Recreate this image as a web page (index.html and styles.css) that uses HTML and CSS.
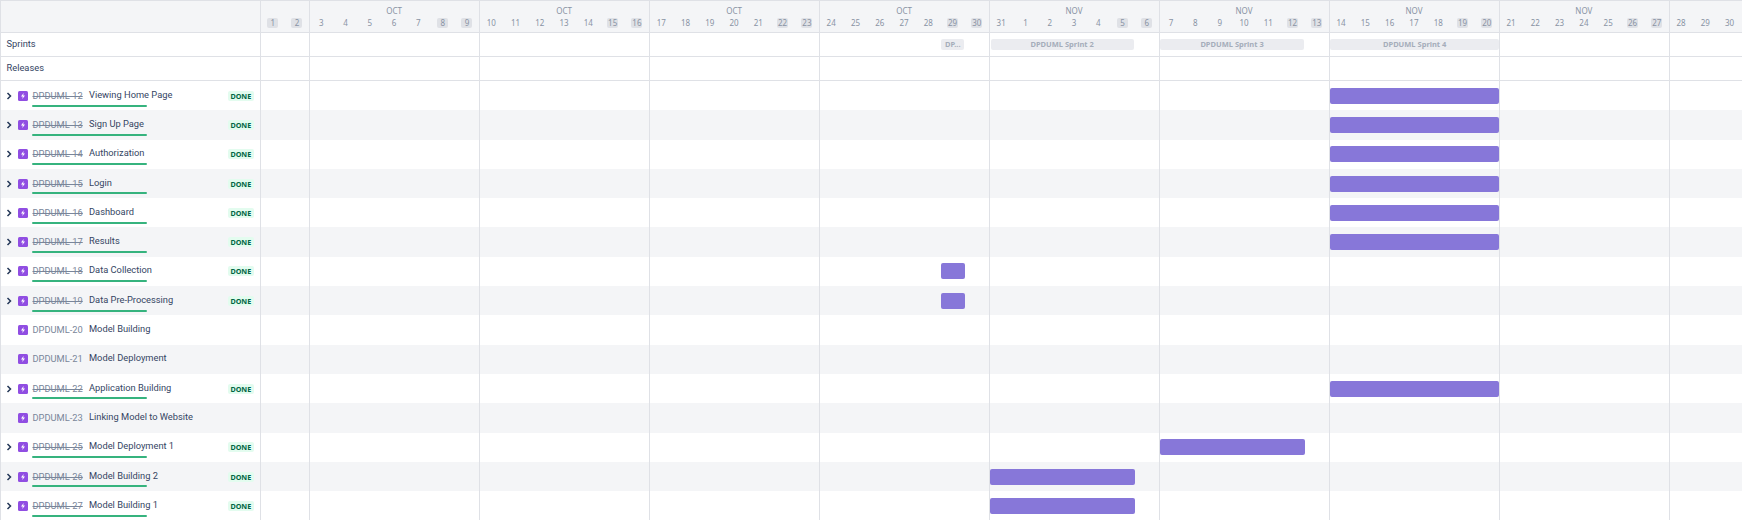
FILE: index.html
```html
<!DOCTYPE html>
<html lang="en">
<head>
<meta charset="utf-8">
<title>Roadmap</title>
<link rel="stylesheet" href="styles.css">
</head>
<body>
<svg class="defs" width="0" height="0" aria-hidden="true">
  <symbol id="epic" viewBox="0 0 10 10"><rect width="10" height="10" rx="1.5" fill="#904ee2"/><path d="M5.6 2 3 5.5h1.8L4.3 8 7 4.5H5.2z" fill="#fff"/></symbol>
  <symbol id="chev" viewBox="0 0 6 8"><path d="M1.5 1 4.5 4 1.5 7" fill="none" stroke="#253858" stroke-width="1.5"/></symbol>
</svg>
<main class="roadmap">
  <div class="row head">
    <div class="side"></div>
    <div class="track">
      <div class="day c1"><span class="wk">1</span></div><div class="day"><span class="wk">2</span></div>
      <div class="day"><span>3</span></div><div class="day"><span>4</span></div><div class="day"><span>5</span></div><div class="day"><em>OCT</em><span>6</span></div><div class="day"><span>7</span></div><div class="day"><span class="wk">8</span></div><div class="day"><span class="wk">9</span></div>
      <div class="day"><span>10</span></div><div class="day"><span>11</span></div><div class="day"><span>12</span></div><div class="day"><em>OCT</em><span>13</span></div><div class="day"><span>14</span></div><div class="day"><span class="wk">15</span></div><div class="day"><span class="wk">16</span></div>
      <div class="day"><span>17</span></div><div class="day"><span>18</span></div><div class="day"><span>19</span></div><div class="day"><em>OCT</em><span>20</span></div><div class="day"><span>21</span></div><div class="day"><span class="wk">22</span></div><div class="day"><span class="wk">23</span></div>
      <div class="day"><span>24</span></div><div class="day"><span>25</span></div><div class="day"><span>26</span></div><div class="day"><em>OCT</em><span>27</span></div><div class="day"><span>28</span></div><div class="day"><span class="wk">29</span></div><div class="day"><span class="wk">30</span></div>
      <div class="day"><span>31</span></div><div class="day"><span>1</span></div><div class="day"><span>2</span></div><div class="day"><em>NOV</em><span>3</span></div><div class="day"><span>4</span></div><div class="day"><span class="wk">5</span></div><div class="day"><span class="wk">6</span></div>
      <div class="day"><span>7</span></div><div class="day"><span>8</span></div><div class="day"><span>9</span></div><div class="day"><em>NOV</em><span>10</span></div><div class="day"><span>11</span></div><div class="day"><span class="wk">12</span></div><div class="day"><span class="wk">13</span></div>
      <div class="day"><span>14</span></div><div class="day"><span>15</span></div><div class="day"><span>16</span></div><div class="day"><em>NOV</em><span>17</span></div><div class="day"><span>18</span></div><div class="day"><span class="wk">19</span></div><div class="day"><span class="wk">20</span></div>
      <div class="day"><span>21</span></div><div class="day"><span>22</span></div><div class="day"><span>23</span></div><div class="day"><em>NOV</em><span>24</span></div><div class="day"><span>25</span></div><div class="day"><span class="wk">26</span></div><div class="day"><span class="wk">27</span></div>
      <div class="day"><span>28</span></div><div class="day"><span>29</span></div><div class="day"><span>30</span></div>
    </div>
  </div>
  <div class="row meta">
    <div class="side label">Sprints</div>
    <div class="track">
      <div class="sprint s1">DP...</div>
      <div class="sprint s2">DPDUML Sprint 2</div>
      <div class="sprint s3">DPDUML Sprint 3</div>
      <div class="sprint s4">DPDUML Sprint 4</div>
    </div>
  </div>
  <div class="row meta">
    <div class="side label">Releases</div>
    <div class="track"></div>
  </div>

  <div class="row issue"><div class="side"><svg class="chev"><use href="#chev"/></svg><svg class="epic"><use href="#epic"/></svg><span class="key done">DPDUML-12</span><span class="name">Viewing Home Page</span><i class="progress"></i><b class="loz">DONE</b></div><div class="track"><div class="bar b-nov14"></div></div></div>
  <div class="row issue"><div class="side"><svg class="chev"><use href="#chev"/></svg><svg class="epic"><use href="#epic"/></svg><span class="key done">DPDUML-13</span><span class="name">Sign Up Page</span><i class="progress"></i><b class="loz">DONE</b></div><div class="track"><div class="bar b-nov14"></div></div></div>
  <div class="row issue"><div class="side"><svg class="chev"><use href="#chev"/></svg><svg class="epic"><use href="#epic"/></svg><span class="key done">DPDUML-14</span><span class="name">Authorization</span><i class="progress"></i><b class="loz">DONE</b></div><div class="track"><div class="bar b-nov14"></div></div></div>
  <div class="row issue"><div class="side"><svg class="chev"><use href="#chev"/></svg><svg class="epic"><use href="#epic"/></svg><span class="key done">DPDUML-15</span><span class="name">Login</span><i class="progress"></i><b class="loz">DONE</b></div><div class="track"><div class="bar b-nov14"></div></div></div>
  <div class="row issue"><div class="side"><svg class="chev"><use href="#chev"/></svg><svg class="epic"><use href="#epic"/></svg><span class="key done">DPDUML-16</span><span class="name">Dashboard</span><i class="progress"></i><b class="loz">DONE</b></div><div class="track"><div class="bar b-nov14"></div></div></div>
  <div class="row issue"><div class="side"><svg class="chev"><use href="#chev"/></svg><svg class="epic"><use href="#epic"/></svg><span class="key done">DPDUML-17</span><span class="name">Results</span><i class="progress"></i><b class="loz">DONE</b></div><div class="track"><div class="bar b-nov14"></div></div></div>
  <div class="row issue"><div class="side"><svg class="chev"><use href="#chev"/></svg><svg class="epic"><use href="#epic"/></svg><span class="key done">DPDUML-18</span><span class="name">Data Collection</span><i class="progress"></i><b class="loz">DONE</b></div><div class="track"><div class="bar b-oct29"></div></div></div>
  <div class="row issue"><div class="side"><svg class="chev"><use href="#chev"/></svg><svg class="epic"><use href="#epic"/></svg><span class="key done">DPDUML-19</span><span class="name">Data Pre-Processing</span><i class="progress"></i><b class="loz">DONE</b></div><div class="track"><div class="bar b-oct29"></div></div></div>
  <div class="row issue"><div class="side"><span class="chev"></span><svg class="epic"><use href="#epic"/></svg><span class="key">DPDUML-20</span><span class="name">Model Building</span></div><div class="track"></div></div>
  <div class="row issue"><div class="side"><span class="chev"></span><svg class="epic"><use href="#epic"/></svg><span class="key">DPDUML-21</span><span class="name">Model Deployment</span></div><div class="track"></div></div>
  <div class="row issue"><div class="side"><svg class="chev"><use href="#chev"/></svg><svg class="epic"><use href="#epic"/></svg><span class="key done">DPDUML-22</span><span class="name">Application Building</span><i class="progress"></i><b class="loz">DONE</b></div><div class="track"><div class="bar b-nov14"></div></div></div>
  <div class="row issue"><div class="side"><span class="chev"></span><svg class="epic"><use href="#epic"/></svg><span class="key">DPDUML-23</span><span class="name">Linking Model to Website</span></div><div class="track"></div></div>
  <div class="row issue"><div class="side"><svg class="chev"><use href="#chev"/></svg><svg class="epic"><use href="#epic"/></svg><span class="key done">DPDUML-25</span><span class="name">Model Deployment 1</span><i class="progress"></i><b class="loz">DONE</b></div><div class="track"><div class="bar b-nov7"></div></div></div>
  <div class="row issue"><div class="side"><svg class="chev"><use href="#chev"/></svg><svg class="epic"><use href="#epic"/></svg><span class="key done">DPDUML-26</span><span class="name">Model Building 2</span><i class="progress"></i><b class="loz">DONE</b></div><div class="track"><div class="bar b-oct31"></div></div></div>
  <div class="row issue"><div class="side"><svg class="chev"><use href="#chev"/></svg><svg class="epic"><use href="#epic"/></svg><span class="key done">DPDUML-27</span><span class="name">Model Building 1</span><i class="progress"></i><b class="loz">DONE</b></div><div class="track"><div class="bar b-oct31"></div></div></div>
</main>
</body>
</html>
```

FILE: styles.css
```css
* { box-sizing: border-box; }
html, body { margin: 0; padding: 0; background: #fff; }
body { width: 1742px; height: 520px; overflow: hidden; font-family: Roboto, "Liberation Sans", sans-serif; color: #253858; }
.defs { position: absolute; }

.roadmap { display: flex; flex-direction: column; border-top: 1px solid #dfe1e6; }

.row { display: grid; grid-template-columns: 260.57px 1481.43px; flex: none; }
.side { display: flex; align-items: center; border-left: 1px solid #dfe1e6; border-right: 1px solid #dfe1e6; position: relative; min-width: 0; }
.track {
  display: grid;
  grid-template-columns: repeat(61, 24.2857px);
  grid-template-rows: 1fr;
  background-image: linear-gradient(to right, #dfe1e6 1px, transparent 1px);
  background-size: 170px 100%;
  background-position: 48px 0;
}

.head { height: 32px; background: #f4f5f7; border-bottom: 1px solid #dfe1e6; }
.day { position: relative; display: flex; justify-content: center; align-items: flex-start; padding-top: 17px; font-family: "Noto Sans", sans-serif; font-size: 8px; line-height: 10px; color: #8993a4; }
.day span { display: block; min-width: 11px; height: 10px; text-align: center; border-radius: 2px; }
.day .wk { background: #dfe1e6; }
.day em { position: absolute; top: 3.5px; left: 50%; transform: translateX(-50%); font-style: normal; font-size: 8px; line-height: 11px; color: #8993a4; }

.meta { height: 24px; border-bottom: 1px solid #dfe1e6; }
.label { font-size: 9.3px; padding-left: 5.5px; padding-bottom: 3px; color: #344563; }
.sprint { align-self: center; height: 11px; margin-bottom: 0.5px; background: #ebecf0; border-radius: 2px; font-family: "Noto Sans", sans-serif; font-size: 7.5px; line-height: 11px; font-weight: 700; color: #a5adba; text-align: center; white-space: nowrap; overflow: hidden; }
.s1 { grid-column: 29 / span 1; margin-left: 1px; margin-right: 0.5px; }
.s2 { grid-column: 31 / span 6; margin-left: 1.5px; margin-right: 1px; }
.s3 { grid-column: 38 / span 6; margin-left: 1.5px; margin-right: 1px; }
.s4 { grid-column: 45 / span 7; margin-left: 1.5px; }

.issue { height: 29.3px; }
.issue:nth-child(odd) { background: #f4f5f7; }
.chev { width: 6px; height: 8px; margin-left: 5px; flex: none; }
.epic { width: 10px; height: 10px; margin-left: 5.5px; flex: none; }
.key { margin-left: 5px; font-size: 9.3px; color: #7a869a; white-space: nowrap; width: 52px; flex: none; padding-bottom: 1px; }
.key.done { text-decoration: line-through; }
.name { margin-left: 4.5px; font-size: 9.3px; color: #344563; white-space: nowrap; padding-bottom: 3px; }
.progress { position: absolute; left: 31px; top: 23.5px; width: 114.5px; height: 2px; border-radius: 1px; background: #36b37e; }
.loz { margin-left: auto; margin-right: 6px; width: 25.5px; height: 10px; background: #e3fcef; border-radius: 2px; font-family: "Noto Sans", sans-serif; font-size: 7.2px; line-height: 10px; font-weight: 700; color: #006644; text-align: center; }

.bar { align-self: center; height: 16px; background: #8777d9; border-radius: 2px; margin-left: 1px; }
.b-nov14 { grid-column: 45 / span 7; }
.b-oct29 { grid-column: 29 / span 1; }
.b-oct31 { grid-column: 31 / span 6; }
.b-nov7 { grid-column: 38 / span 6; }
```
